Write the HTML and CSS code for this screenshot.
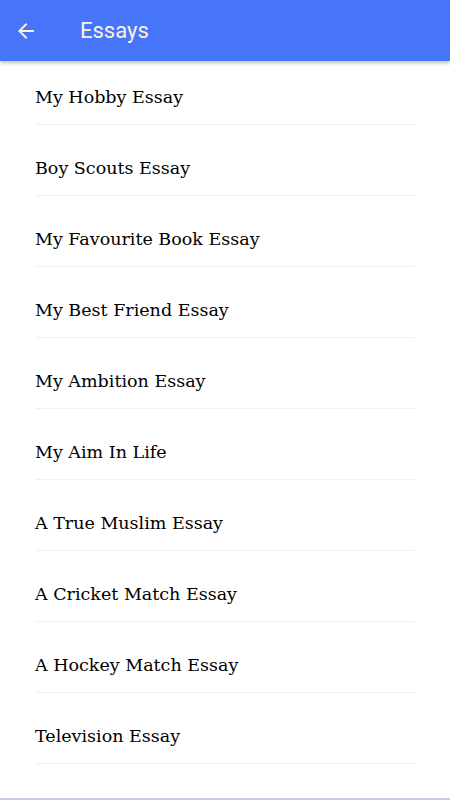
FILE: index.html
```html
<!DOCTYPE html>
<html>
    <head>
        <meta charset="UTF-8">
        <title>Essays</title>
        <link rel="stylesheet" href="styles.css">
    </head>
    <body>
        <header class="app-bar">
            <span class="back">
                <svg width="24" height="24" viewBox="0 0 24 24">
                    <path d="M20 11H7.83l5.59-5.59L12 4l-8 8 8 8 1.41-1.41L7.83 13H20v-2z" fill="#fdf1dc"/>
                </svg>
            </span>
            <h1 class="title">Essays</h1>
        </header>
        <ul class="essay-list">
            <li>My Hobby Essay</li>
            <li>Boy Scouts Essay</li>
            <li>My Favourite Book Essay</li>
            <li>My Best Friend Essay</li>
            <li>My Ambition Essay</li>
            <li>My Aim In Life</li>
            <li>A True Muslim Essay</li>
            <li>A Cricket Match Essay</li>
            <li>A Hockey Match Essay</li>
            <li>Television Essay</li>
        </ul>
        <div class="bottom-line"></div>
    </body>
</html>
```

FILE: styles.css
```css
* {
    padding: 0;
    margin: 0;
    box-sizing: border-box;
}

body {
    width: 450px;
    height: 800px;
    background: #fff;
    overflow: hidden;
    display: flex;
    flex-direction: column;
}

.app-bar {
    position: relative;
    z-index: 2;
    height: 61px;
    background-color: #4675fa;
    display: flex;
    align-items: center;
    padding-left: 14px;
    box-shadow: 0 2px 4px rgba(0, 0, 0, 0.25);
}

.back {
    width: 24px;
    height: 24px;
    display: flex;
}

.title {
    margin-left: 42px;
    font-family: Roboto, "Liberation Sans", sans-serif;
    font-weight: 400;
    font-size: 22px;
    color: #fdf1dc;
}

.essay-list {
    list-style: none;
    margin-top: -7px;
    padding: 0 35px;
    flex: 1;
}

.essay-list li {
    padding-top: 32px;
    padding-bottom: 16px;
    line-height: 22px;
    font-family: "DejaVu Serif", "Liberation Serif", serif;
    font-size: 17.5px;
    color: #000;
    border-bottom: 1px solid #f0f0f0;
}

.bottom-line {
    height: 2px;
    background-color: #c9c9f2;
}
```
